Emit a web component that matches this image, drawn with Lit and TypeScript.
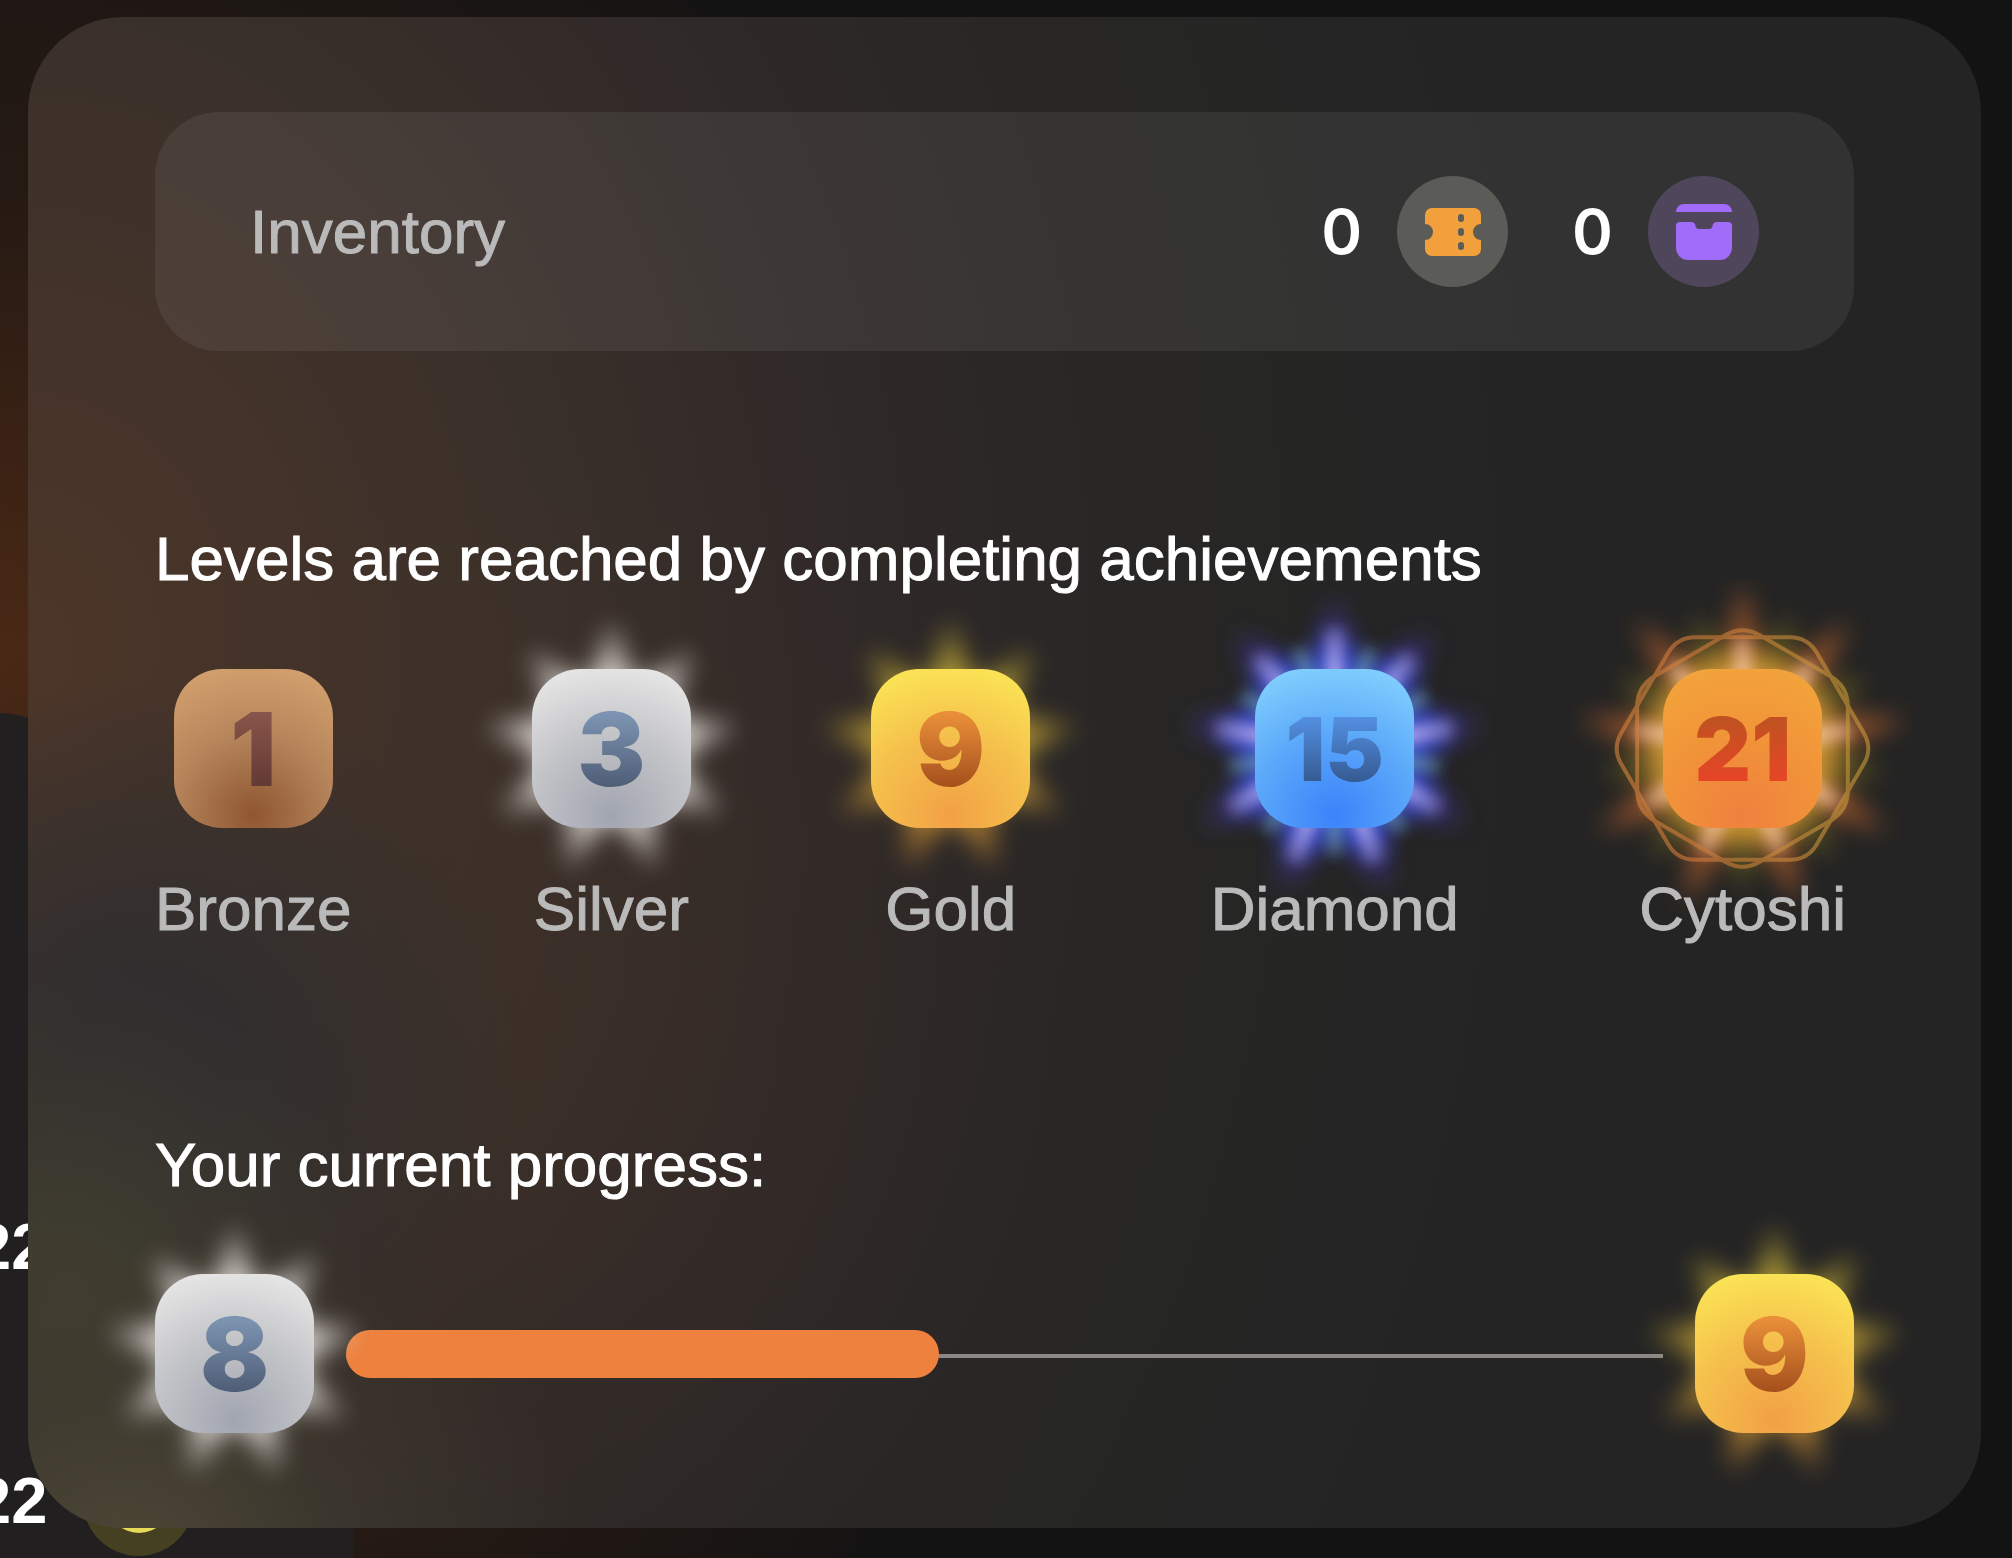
import { LitElement, html, css, svg, nothing } from "lit";
import { customElement, property } from "lit/decorators.js";

type Tier = "bronze" | "silver" | "gold" | "diamond" | "cytoshi";

const polar = (r: number, deg: number): [number, number] => {
  const a = ((deg - 90) * Math.PI) / 180;
  return [Math.round(r * Math.cos(a) * 10) / 10, Math.round(r * Math.sin(a) * 10) / 10];
};

/** Star outline with its first tip pointing up. */
const star = (tips: number, outer: number, inner: number): string => {
  const step = 360 / tips;
  const pts: string[] = [];
  for (let i = 0; i < tips; i++) {
    pts.push(polar(outer, i * step).join(","), polar(inner, (i + 0.5) * step).join(","));
  }
  return pts.join(" ");
};

const rays = (count: number, from: number, to: number, offset = 0) =>
  Array.from({ length: count }, (_, i) => {
    const a = offset + (i * 360) / count;
    const [x1, y1] = polar(from, a);
    const [x2, y2] = polar(to, a);
    return svg`<line x1=${x1} y1=${y1} x2=${x2} y2=${y2} />`;
  });

/** Closed polygon whose corners are rounded with quadratic curves. */
const roundedPolygon = (pts: [number, number][], cut: number): string => {
  const toward = (a: [number, number], b: [number, number]) => {
    const d = Math.hypot(b[0] - a[0], b[1] - a[1]);
    return `${a[0] + ((b[0] - a[0]) * cut) / d} ${a[1] + ((b[1] - a[1]) * cut) / d}`;
  };
  const n = pts.length;
  return (
    pts
      .map((p, i) => {
        const prev = pts[(i + n - 1) % n];
        const next = pts[(i + 1) % n];
        return `${i ? "L" : "M"}${toward(p, prev)} Q${p[0]} ${p[1]} ${toward(p, next)}`;
      })
      .join(" ") + "Z"
  );
};

const hexWide = roundedPolygon(
  [[-130, 0], [-65, -111], [65, -111], [130, 0], [65, 111], [-65, 111]],
  18,
);
const hexTall = roundedPolygon(
  [[0, -123], [105, -62], [105, 62], [0, 123], [-105, 62], [-105, -62]],
  20,
);

const glows: Record<Tier, unknown> = {
  bronze: nothing,
  silver: svg`
    <g mask="url(#fade)">
      <polygon filter="url(#soft)" points=${star(9, 144, 70)} fill="#dcd6d2" />
    </g>`,
  gold: svg`
    <defs>
      <linearGradient id="goldRay" x1="0" y1="0" x2="0" y2="1">
        <stop offset="0" stop-color="#d8c63c" />
        <stop offset="0.6" stop-color="#c49c34" />
        <stop offset="1" stop-color="#d88a34" />
      </linearGradient>
    </defs>
    <g mask="url(#fade)" opacity="0.85">
      <polygon filter="url(#soft)" points=${star(9, 144, 70)} fill="url(#goldRay)" />
    </g>`,
  diamond: svg`
    <g filter="url(#soft)" opacity="0.6">
      <polygon points=${star(9, 150, 84)} fill="#4a38a8" />
    </g>
    <g filter="url(#soft)" opacity="0.85">
      <polygon points=${star(9, 118, 84)} fill="#2f50dc" />
    </g>
    <g mask="url(#fade)" opacity="0.9">
      <g filter="url(#fine)" stroke="#6aa3b4" stroke-width="14">${rays(9, 60, 108, 20)}</g>
    </g>
    <g mask="url(#fade)">
      <g filter="url(#fine)" stroke="#c4b4ee" stroke-width="17">${rays(9, 60, 122)}</g>
    </g>`,
  cytoshi: svg`
    <defs>
      <linearGradient id="hexLine" x1="0" y1="0" x2="1" y2="0">
        <stop offset="0" stop-color="#d8843c" />
        <stop offset="0.3" stop-color="#d07a3c" />
        <stop offset="1" stop-color="#c99a3a" />
      </linearGradient>
    </defs>
    <g filter="url(#soft)" opacity="0.66">
      <polygon points=${star(9, 166, 74)} fill="#c8682e" />
    </g>
    <g filter="url(#soft)" opacity="0.4">
      <polygon points=${star(9, 140, 84)} fill="#a89024" transform="rotate(20)" />
    </g>
    <g filter="url(#soft)" opacity="0.7">
      <circle r="92" fill="#e2a838" />
    </g>
    <g mask="url(#fade)">
      <g filter="url(#fine)" stroke="#f2bfa0" stroke-width="17">${rays(9, 60, 112)}</g>
    </g>
    <g fill="none" stroke="url(#hexLine)" stroke-width="4" opacity="0.6">
      <path d=${hexWide} />
      <path d=${hexTall} />
    </g>`,
};

@customElement("level-badge")
export class LevelBadge extends LitElement {
  @property() tier: Tier = "bronze";
  @property({ type: Number }) level = 1;

  static styles = css`
    :host {
      display: block;
      flex: none;
    }
    .badge {
      position: relative;
      width: 159px;
      height: 159px;
    }
    .glow {
      position: absolute;
      inset: -91px;
      width: calc(100% + 182px);
      height: calc(100% + 182px);
      pointer-events: none;
    }
    .tile {
      position: relative;
      display: grid;
      place-items: center;
      width: 100%;
      height: 100%;
      border-radius: 48px;
      background: radial-gradient(circle 168px at 50% 92%, var(--core), var(--mid) 48%, var(--rim) 92%);
    }
    .number {
      font: 900 102px/102px Inter, "Liberation Sans", sans-serif;
      background: linear-gradient(var(--ink-top) 16%, var(--ink-bottom) 86%);
      background-clip: text;
      -webkit-background-clip: text;
      color: transparent;
    }
    .number.wide {
      font-size: 88px;
    }
    .bronze {
      --core: #8e5631;
      --mid: #b5845a;
      --rim: #d3a06e;
      --ink-top: #86544a;
      --ink-bottom: #643a34;
    }
    .silver {
      --core: #a1a5b0;
      --mid: #c3c4c8;
      --rim: #e8e7e7;
      --ink-top: #7c94b2;
      --ink-bottom: #505e77;
    }
    .gold {
      --core: #f2a045;
      --mid: #f5c04c;
      --rim: #fbe555;
      --ink-top: #e98f39;
      --ink-bottom: #a6501d;
    }
    .diamond {
      --core: #3c82fa;
      --mid: #5ba8fa;
      --rim: #82d0fd;
      --ink-top: #5592e5;
      --ink-bottom: #33578d;
    }
    .cytoshi {
      --core: #f0803e;
      --mid: #f19439;
      --rim: #f3a43b;
      --ink-top: #bd5320;
      --ink-bottom: #e94427;
    }
  `;

  render() {
    const wide = this.level > 9 ? "wide" : "";
    return html`
      <div class="badge ${this.tier}">
        <svg class="glow" viewBox="-170 -170 340 340" aria-hidden="true">
          <defs>
            <filter id="soft" x="-30%" y="-30%" width="160%" height="160%">
              <feGaussianBlur stdDeviation="12" />
            </filter>
            <filter id="fine" x="-30%" y="-30%" width="160%" height="160%">
              <feGaussianBlur stdDeviation="7" />
            </filter>
            <radialGradient id="fadeRamp" gradientUnits="userSpaceOnUse" cx="0" cy="0" r="145">
              <stop offset="0.5" stop-color="#fff" stop-opacity="0.9" />
              <stop offset="1" stop-color="#fff" stop-opacity="0" />
            </radialGradient>
            <mask id="fade" maskUnits="userSpaceOnUse" x="-170" y="-170" width="340" height="340">
              <circle r="170" fill="url(#fadeRamp)" />
            </mask>
          </defs>
          ${glows[this.tier]}
        </svg>
        <div class="tile"><span class="number ${wide}">${this.level}</span></div>
      </div>
    `;
  }
}

const ticketIcon = svg`
  <path fill="#f2a03b" fill-rule="evenodd" d="M7 4H49a7 7 0 0 1 7 7v9a8 8 0 0 0 0 16v9a7 7 0 0 1-7 7H7a7 7 0 0 1-7-7V36a8 8 0 0 0 0-16V11a7 7 0 0 1 7-7Z
    M36 10a3 3 0 0 0-3 3v2a3 3 0 0 0 6 0v-2a3 3 0 0 0-3-3Z
    M36 24a3 3 0 0 0-3 3v2a3 3 0 0 0 6 0v-2a3 3 0 0 0-3-3Z
    M36 38a3 3 0 0 0-3 3v2a3 3 0 0 0 6 0v-2a3 3 0 0 0-3-3Z" />`;

const boxIcon = svg`
  <path fill="#a16cf9" d="M0 8a8 8 0 0 1 8-8H48a8 8 0 0 1 8 8Z" />
  <path fill="#a16cf9" d="M4 18H15q4 0 4.500 4q.5 3 3.500 3H33q3 0 3.500-3q.5-4 4.500-4H52a4 4 0 0 1 4 4V44a12 12 0 0 1-12 12H12a12 12 0 0 1-12-12V22a4 4 0 0 1 4-4Z" />`;

@customElement("app-root")
export class AppRoot extends LitElement {
  static styles = css`
    :host {
      display: block;
      font: 400 62px/96px "Liberation Sans", Arial, sans-serif;
      color: #fff;
    }
    .stage {
      position: relative;
      overflow: hidden;
      min-height: 100vh;
      box-sizing: border-box;
      padding: 17px 31px 28px 28px;
      background:
        radial-gradient(ellipse 1000px 1000px at 0 650px, rgba(88, 46, 22, 0.8), rgba(64, 36, 20, 0.42) 45%, rgba(30, 24, 20, 0) 100%),
        radial-gradient(ellipse 600px 700px at 340px 1300px, rgba(56, 32, 22, 0.7), rgba(30, 22, 18, 0) 100%),
        #131313;
    }
    /* Card of the page underneath, partly hidden by the panel */
    .under {
      position: absolute;
      top: 713px;
      bottom: 0;
      left: 0;
      width: 353px;
      background: linear-gradient(#211f20, #211f20) 0 200px no-repeat;
      overflow: hidden;
    }
    .under::before {
      content: "";
      display: block;
      width: 86px;
      height: 478px;
      border-radius: 0 96px 0 0;
      background: #211f20;
    }
    .under-row {
      display: flex;
      align-items: center;
      gap: 36px;
      height: 111px;
      margin: 0 0 143px -25px;
      font-size: 65px;
      font-weight: 700;
    }
    .coin {
      display: grid;
      place-items: center;
      width: 111px;
      height: 111px;
      border-radius: 50%;
      background: #454022;
    }
    .coin::after {
      content: "";
      width: 64px;
      height: 64px;
      border-radius: 50%;
      background: #e6da57;
    }
    .panel {
      position: relative;
      z-index: 0;
      padding: 95px 127px;
      border-radius: 95px;
      background:
        radial-gradient(ellipse 460px 340px at 5% 103%, rgba(82, 77, 56, 0.85), rgba(66, 63, 50, 0.5) 50%, rgba(50, 48, 44, 0) 100%),
        radial-gradient(ellipse 300px 320px at 2% 84%, rgba(66, 64, 48, 0.85), rgba(62, 60, 50, 0) 100%),
        radial-gradient(ellipse 380px 380px at 6% 69%, rgba(47, 46, 47, 0.95) 20%, rgba(49, 47, 47, 0.6) 55%, rgba(52, 48, 47, 0) 100%),
        radial-gradient(ellipse 560px 600px at 24% 68%, rgba(66, 48, 38, 0.4), rgba(58, 46, 40, 0) 100%),
        radial-gradient(ellipse 1550px 1900px at 0 42%, #4d3628, #43332a 18%, #3a302a 34%, #312a28 50%, #2a2726 66%, #262625 80%, #242424 100%);
    }
    .inventory {
      display: flex;
      align-items: center;
      justify-content: space-between;
      padding: 64px 95px;
      border-radius: 64px;
      background: rgba(255, 255, 255, 0.065);
    }
    .caption {
      color: #bababa;
      -webkit-text-stroke: 1px #bababa;
    }
    .title {
      margin: 0;
      font: inherit;
      -webkit-text-stroke: 1px #fff;
    }
    h2.caption {
      margin: 0;
      font: inherit;
    }
    .items,
    .item {
      display: flex;
      align-items: center;
    }
    .items {
      gap: 64px;
    }
    .item {
      gap: 35px;
    }
    .count {
      font: 600 62px/96px Inter, "Liberation Sans", sans-serif;
    }
    .disc {
      display: grid;
      place-items: center;
      width: 111px;
      height: 111px;
      border-radius: 50%;
    }
    .ticket {
      background: #5b5b58;
    }
    .box {
      background: #50465b;
    }
    .disc svg {
      width: 56px;
      height: 56px;
    }
    .section {
      margin-top: 160px;
    }
    .levels {
      display: flex;
      justify-content: space-between;
      margin: 62px 0 0;
      padding: 0 8px 0 0;
      list-style: none;
    }
    .level {
      display: flex;
      flex-direction: column;
      align-items: center;
      gap: 33px;
    }
    .level .caption {
      position: relative;
    }
    .progress {
      display: flex;
      align-items: center;
      gap: 32px;
      margin-top: 61px;
    }
    .track {
      position: relative;
      z-index: -1;
      display: flex;
      align-items: center;
      flex: 1;
      height: 48px;
      background: linear-gradient(#8b8886, #8b8886) 0 24px / 100% 4px no-repeat;
    }
    .fill {
      height: 48px;
      border-radius: 24px;
      background: #ee813d;
    }
  `;

  private levels: { tier: Tier; level: number; name: string }[] = [
    { tier: "bronze", level: 1, name: "Bronze" },
    { tier: "silver", level: 3, name: "Silver" },
    { tier: "gold", level: 9, name: "Gold" },
    { tier: "diamond", level: 15, name: "Diamond" },
    { tier: "cytoshi", level: 21, name: "Cytoshi" },
  ];

  private percent = 45;

  render() {
    return html`
      <div class="stage">
        <div class="under">
          <div class="under-row"><span>22</span><span class="coin"></span></div>
          <div class="under-row"><span>22</span><span class="coin"></span></div>
        </div>
        <main class="panel">
          <section class="inventory">
            <h2 class="caption">Inventory</h2>
            <div class="items">
              <div class="item">
                <span class="count">0</span>
                <span class="disc ticket"><svg viewBox="0 0 56 56" aria-hidden="true">${ticketIcon}</svg></span>
              </div>
              <div class="item">
                <span class="count">0</span>
                <span class="disc box"><svg viewBox="0 0 56 56" aria-hidden="true">${boxIcon}</svg></span>
              </div>
            </div>
          </section>
          <section class="section">
            <h2 class="title">Levels are reached by completing achievements</h2>
            <ul class="levels">
              ${this.levels.map(
                (l) => html`
                  <li class="level">
                    <level-badge .tier=${l.tier} .level=${l.level}></level-badge>
                    <span class="caption">${l.name}</span>
                  </li>
                `,
              )}
            </ul>
          </section>
          <section class="section">
            <h2 class="title" id="progress-title">Your current progress:</h2>
            <div class="progress">
              <level-badge .tier=${"silver"} .level=${8}></level-badge>
              <div
                class="track"
                role="progressbar"
                aria-labelledby="progress-title"
                aria-valuenow=${this.percent}
                aria-valuemin="0"
                aria-valuemax="100"
              >
                <div class="fill" style="width:${this.percent}%"></div>
              </div>
              <level-badge .tier=${"gold"} .level=${9}></level-badge>
            </div>
          </section>
        </main>
      </div>
    `;
  }
}
